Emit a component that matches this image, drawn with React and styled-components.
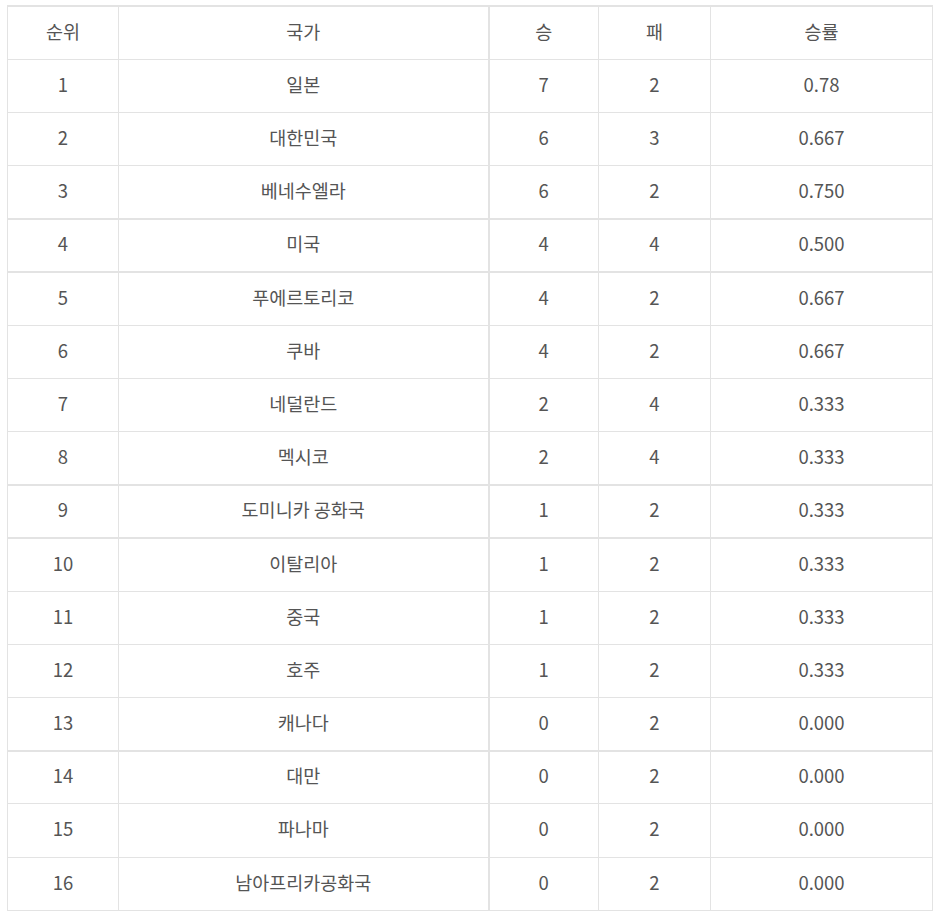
import React from "react";
import styled, { createGlobalStyle } from "styled-components";

const GlobalStyle = createGlobalStyle`
  html, body {
    margin: 0;
    padding: 0;
    background: #fff;
  }
`;

const Page = styled.div`
  padding: 5px 0 0 7px;
`;

const Table = styled.table`
  width: 925px;
  table-layout: fixed;
  border-collapse: collapse;
  border-top: 2px solid #e3e3e3;
  font-family: "Noto Sans CJK KR", "Noto Sans", sans-serif;
  font-size: 18.5px;
  color: #555;
`;

const Row = styled.tr`
  height: 53.2px;
`;

const HeadCell = styled.th`
  font-weight: 400;
  text-align: center;
  border: 1px solid #e3e3e3;
  border-left-width: ${(p) => (p.$thick ? "2px" : "1px")};
  padding: 0 0 4px;
`;

const Cell = styled.td`
  text-align: center;
  border: 1px solid #e3e3e3;
  border-left-width: ${(p) => (p.$thick ? "2px" : "1px")};
  border-bottom-width: ${(p) => (p.$split ? "2px" : "1px")};
  padding: 0 0 4px;
`;

const rows = [
  [1, "일본", 7, 2, "0.78"],
  [2, "대한민국", 6, 3, "0.667"],
  [3, "베네수엘라", 6, 2, "0.750", true],
  [4, "미국", 4, 4, "0.500", true],
  [5, "푸에르토리코", 4, 2, "0.667"],
  [6, "쿠바", 4, 2, "0.667"],
  [7, "네덜란드", 2, 4, "0.333"],
  [8, "멕시코", 2, 4, "0.333", true],
  [9, "도미니카 공화국", 1, 2, "0.333", true],
  [10, "이탈리아", 1, 2, "0.333"],
  [11, "중국", 1, 2, "0.333"],
  [12, "호주", 1, 2, "0.333"],
  [13, "캐나다", 0, 2, "0.000", true],
  [14, "대만", 0, 2, "0.000"],
  [15, "파나마", 0, 2, "0.000"],
  [16, "남아프리카공화국", 0, 2, "0.000"],
];

export default function App() {
  return (
    <Page>
      <GlobalStyle />
      <Table>
        <colgroup>
          <col style={{ width: 111 }} />
          <col style={{ width: 370 }} />
          <col style={{ width: 110 }} />
          <col style={{ width: 112 }} />
          <col style={{ width: 222 }} />
        </colgroup>
        <thead>
          <Row>
            <HeadCell>순위</HeadCell>
            <HeadCell>국가</HeadCell>
            <HeadCell $thick>승</HeadCell>
            <HeadCell>패</HeadCell>
            <HeadCell>승률</HeadCell>
          </Row>
        </thead>
        <tbody>
          {rows.map(([rank, name, win, loss, rate, split]) => (
            <Row key={rank}>
              <Cell $split={split}>{rank}</Cell>
              <Cell $split={split}>{name}</Cell>
              <Cell $split={split} $thick>
                {win}
              </Cell>
              <Cell $split={split}>{loss}</Cell>
              <Cell $split={split}>{rate}</Cell>
            </Row>
          ))}
        </tbody>
      </Table>
    </Page>
  );
}
